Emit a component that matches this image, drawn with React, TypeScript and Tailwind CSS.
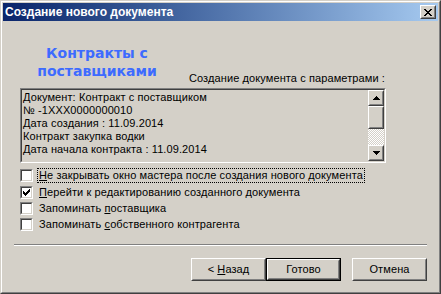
import React from "react";

const Px = ({ rows }: { rows: string[] }) => (
  <svg width={rows[0].length} height={rows.length} shapeRendering="crispEdges" className="block">
    {rows.map((r, y) =>
      r.split("").map((c, x) => (c === "X" ? <rect key={`${x}-${y}`} x={x} y={y} width={1} height={1} fill="#000" /> : null))
    )}
  </svg>
);

const CLOSE = ["XX....XX", ".XX..XX.", "..XXXX..", "...XX...", "..XXXX..", ".XX..XX.", "XX....XX"];
const UP = ["...X...", "..XXX..", ".XXXXX.", "XXXXXXX"];
const DOWN = ["XXXXXXX", ".XXXXX.", "..XXX..", "...X..."];
const CHECK = ["......X", ".....XX", "X...XXX", "XX.XXX.", "XXXXX..", ".XXX...", "..X...."];

function Raised({ className, children }: { className?: string; children?: React.ReactNode }) {
  return (
    <div className={"border border-t-white border-l-white border-r-[#404040] border-b-[#404040] bg-[#d4d0c8] " + (className ?? "")}>
      <div className="h-full border border-t-[#d4d0c8] border-l-[#d4d0c8] border-r-[#808080] border-b-[#808080] flex items-center justify-center">
        {children}
      </div>
    </div>
  );
}

function Check({ checked, label, focus, first }: { checked?: boolean; label: React.ReactNode; focus?: boolean; first?: boolean }) {
  return (
    <div className={"flex items-start " + (first ? "h-[17px]" : "h-[16px]")}>
      <div className="mt-[2px] w-[13px] h-[13px] border border-t-[#808080] border-l-[#808080] border-r-white border-b-white">
        <div className="w-full h-full border border-t-[#404040] border-l-[#404040] border-r-[#d4d0c8] border-b-[#d4d0c8] bg-white flex items-center justify-center">
          {checked && <Px rows={CHECK} />}
        </div>
      </div>
      <div className={"ml-[4px] mt-px h-[15px] px-px leading-[13px] border " + (focus ? "border-dotted border-black" : "border-transparent")}>
        {label}
      </div>
    </div>
  );
}

export default function App() {
  return (
    <div className="w-[441px] h-[294px] bg-[#d4d0c8] text-[11px] tracking-[0.1px] text-black font-['Liberation_Sans',Arial,sans-serif] border border-t-[#d4d0c8] border-l-[#d4d0c8] border-r-[#404040] border-b-[#404040]">
      <div className="h-full border border-t-white border-l-white border-r-[#808080] border-b-[#808080] p-px flex flex-col">
        {/* title bar */}
        <div className="h-[18px] flex items-center justify-between bg-gradient-to-r from-[#0a246a] to-[#a6caf0]">
          <span className="pl-[2px] text-white text-[12px] font-bold tracking-normal leading-[18px]">
            Создание нового документа
          </span>
          <Raised className="w-[16px] h-[14px] mr-[2px]">
            <Px rows={CLOSE} />
          </Raised>
        </div>

        {/* body */}
        <div className="flex-1 px-[11px] flex flex-col">
          <div className="pl-[6px]">
            <div className="w-[366px] h-[67px] flex items-end">
              <div className="w-[154px] self-start pt-[23px] text-center font-['DejaVu_Sans',Verdana,sans-serif] font-bold text-[14px] tracking-normal leading-[18px] text-[#3d6bff]">
                Контракты с<br />поставщиками
              </div>
              <div className="flex-1 text-right pr-px pb-[3px] leading-[13px]">Создание документа с параметрами :</div>
            </div>

            {/* text box */}
            <div className="w-[366px] h-[75px] border border-t-[#808080] border-l-[#808080] border-r-white border-b-white">
              <div className="h-full flex border border-t-[#404040] border-l-[#404040] border-r-[#d4d0c8] border-b-[#d4d0c8]">
                <div className="flex-1 pl-px pt-px leading-[13px] overflow-hidden">
                  <div>Документ: Контракт с поставщиком</div>
                  <div>№ -1XXX0000000010</div>
                  <div>Дата создания : 11.09.2014</div>
                  <div>Контракт закупка водки</div>
                  <div>Дата начала контракта : 11.09.2014</div>
                </div>
                <div className="w-[16px] flex flex-col">
                  <Raised className="h-[16px]">
                    <Px rows={UP} />
                  </Raised>
                  <Raised className="h-[23px]" />
                  <div className="flex-1 bg-[image:repeating-conic-gradient(#ffffff_0%_25%,#d4d0c8_0%_50%)] bg-[length:2px_2px]" />
                  <Raised className="h-[16px]">
                    <Px rows={DOWN} />
                  </Raised>
                </div>
              </div>
            </div>

            {/* options */}
            <div className="mt-[4px] flex flex-col">
              <Check first focus label={<><span className="underline">Н</span>е закрывать окно мастера после создания нового документа</>} />
              <Check checked label={<><span className="underline">П</span>ерейти к редактированию созданного документа</>} />
              <Check label={<>Запоминать <span className="underline">п</span>оставщика</>} />
              <Check label={<>Запоминать <span className="underline">с</span>обственного контрагента</>} />
            </div>
          </div>

          <div className="mt-[12px] border-t border-t-[#808080] border-b border-b-white" />

          <div className="mt-[12px] flex justify-end">
            <Raised className="w-[75px] h-[23px]">
              <span>
                &lt; <span className="underline">Н</span>азад
              </span>
            </Raised>
            <div className="w-[75px] h-[23px] border border-black">
              <div className="h-full border border-t-white border-l-white border-r-[#404040] border-b-[#404040]">
                <div className="h-full border border-t-[#d4d0c8] border-l-[#d4d0c8] border-r-[#808080] border-b-[#808080] flex items-center justify-center">
                  Готово
                </div>
              </div>
            </div>
            <Raised className="w-[75px] h-[23px] ml-[11px]">Отмена</Raised>
          </div>
        </div>
      </div>
    </div>
  );
}
